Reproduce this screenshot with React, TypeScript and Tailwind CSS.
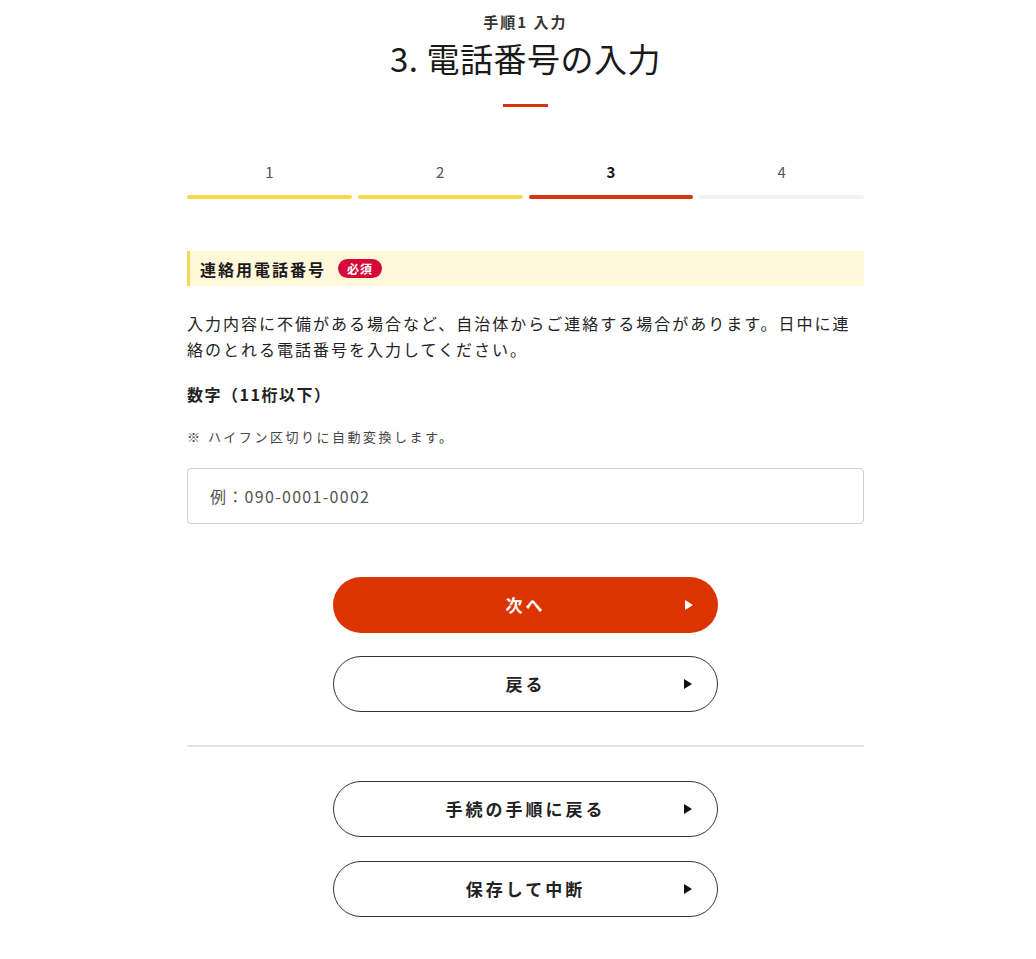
import React from "react";

const steps = [
  { n: "1", bar: "bg-[#f7d94c]", active: false },
  { n: "2", bar: "bg-[#f7d94c]", active: false },
  { n: "3", bar: "bg-[#d8330f]", active: true },
  { n: "4", bar: "bg-[#f2f2f2]", active: false },
];

function Arrow({ white }: { white?: boolean }) {
  return (
    <svg width="8" height="10" viewBox="0 0 8 10" className="absolute right-[25px] top-1/2 -translate-y-1/2">
      <path d="M0 0 L8 5 L0 10 Z" fill={white ? "#ffffff" : "#111111"} />
    </svg>
  );
}

function PillButton({ label, primary }: { label: string; primary?: boolean }) {
  return (
    <button
      className={
        primary
          ? "relative w-[385px] h-[56px] rounded-full bg-[#dc3400] text-white font-bold text-[17px] tracking-[3px]"
          : "relative w-[385px] h-[56px] rounded-full bg-white border border-[#333] text-[#222] font-bold text-[17px] tracking-[3px]"
      }
    >
      {label}
      <Arrow white={primary} />
    </button>
  );
}

export default function App() {
  return (
    <div
      className="min-h-screen bg-white text-[#222] flex justify-center pl-[15px]"
      style={{ fontFamily: '"Noto Sans CJK JP", "Noto Sans", sans-serif' }}
    >
      <div className="w-[677px] flex flex-col pt-[11px] pb-10">
        {/* Header */}
        <div className="flex flex-col items-center">
          <p className="text-[15px] font-bold leading-[22px] tracking-[2px] text-[#333]">手順1 入力</p>
          <h1 className="mt-[3px] text-[33px] leading-[45px] tracking-[0.5px] text-[#1a1a1a]">3. 電話番号の入力</h1>
          <div className="mt-[23px] w-[45px] h-[3px] bg-[#dc3400]" />
        </div>

        {/* Steps */}
        <div className="mt-[54px] grid grid-cols-4 gap-[6px]">
          {steps.map((s) => (
            <div key={s.n} className="flex flex-col items-center">
              <span
                className={
                  s.active
                    ? "text-[15px] leading-[22px] font-bold text-[#111]"
                    : "text-[15px] leading-[22px] text-[#555]"
                }
              >
                {s.n}
              </span>
              <div className={`mt-[12px] w-full h-[4px] rounded-full ${s.bar}`} />
            </div>
          ))}
        </div>

        {/* Label */}
        <div className="mt-[52px] h-[35px] bg-[#fff8d9] border-l-[3px] border-[#f7d94c] flex items-center pl-[10px] gap-[12px]">
          <span className="text-[16px] font-bold tracking-[2px] text-[#1a1a1a]">連絡用電話番号</span>
          <span className="px-[9px] h-[19px] leading-[19px] rounded-full bg-[#d7093b] text-white text-[12px] font-bold tracking-[1px]">必須</span>
        </div>

        <p className="mt-[24px] text-[16px] leading-[26px] tracking-[2px] text-[#222]">
          入力内容に不備がある場合など、自治体からご連絡する場合があります。日中に連絡のとれる電話番号を入力してください。
        </p>

        <p className="mt-[21px] text-[16px] font-bold leading-[22px] tracking-[1.5px] text-[#222]">数字（11桁以下）</p>
        <p className="mt-[23px] text-[13px] leading-[18px] tracking-[2.5px] text-[#444]">※ ハイフン区切りに自動変換します。</p>

        <input
          className="mt-[22px] h-[56px] w-full rounded-[4px] border border-[#cfcfcf] px-[22px] text-[16px] tracking-[1.3px] placeholder:text-[#555] outline-none"
          placeholder="例：090-0001-0002"
        />

        <div className="mt-[53px] flex flex-col items-center gap-[23px]">
          <PillButton label="次へ" primary />
          <PillButton label="戻る" />
        </div>

        <div className="mt-[33px] h-[2px] bg-[#e2e2e2]" />

        <div className="mt-[34px] flex flex-col items-center gap-[24px]">
          <PillButton label="手続の手順に戻る" />
          <PillButton label="保存して中断" />
        </div>
      </div>
    </div>
  );
}
